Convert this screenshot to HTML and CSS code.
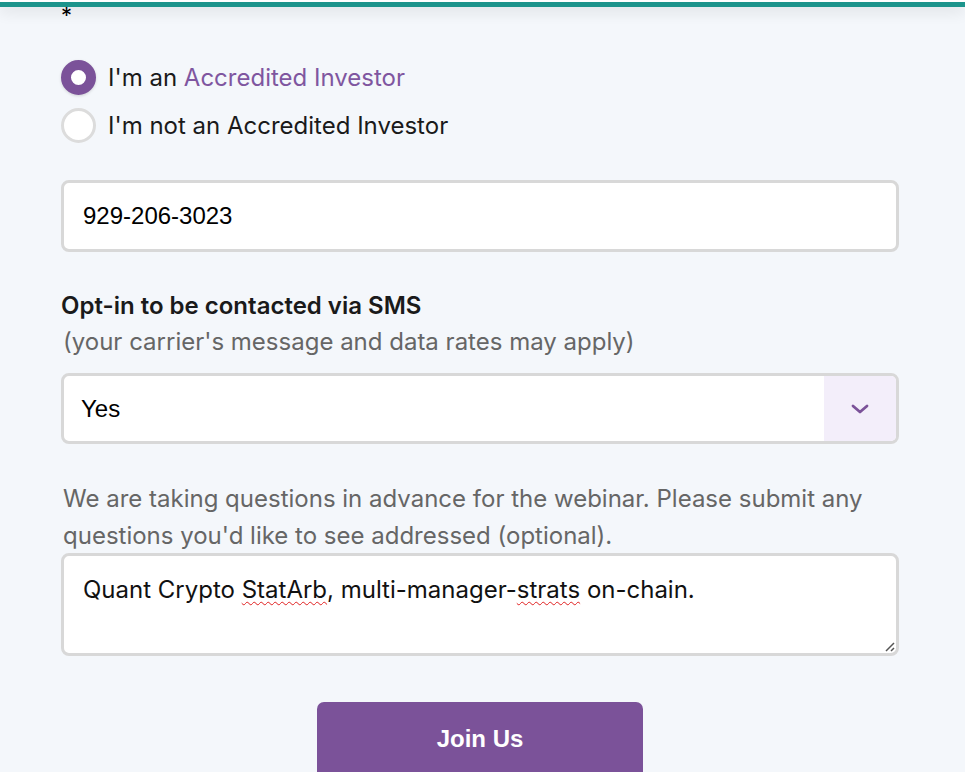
FILE: index.html
```html
<!DOCTYPE html>
<html>
<head>
<meta charset="utf-8">
<link rel="stylesheet" href="styles.css">
</head>
<body>
<div class="topbar"></div>
<form class="form">
  <div class="req">*</div>
  <div class="radios">
    <label class="radio-row">
      <span class="radio checked"></span>
      <span>I'm an <span class="accent">Accredited Investor</span></span>
    </label>
    <label class="radio-row">
      <span class="radio"></span>
      <span>I'm not an Accredited Investor</span>
    </label>
  </div>
  <div class="field phone">929-206-3023</div>
  <div class="label-bold">Opt-in to be contacted via SMS</div>
  <div class="hint">(your carrier's message and data rates may apply)</div>
  <div class="select">
    <div class="select-value">Yes</div>
    <div class="select-arrow">
      <svg width="18" height="10" viewBox="0 0 18 10"><path d="M2 2 L9 8 L16 2" fill="none" stroke="#7b5299" stroke-width="2.8" stroke-linecap="round" stroke-linejoin="round"/></svg>
    </div>
  </div>
  <div class="para">We are taking questions in advance for the webinar. Please submit any questions you'd like to see addressed (optional).</div>
  <div class="textarea">
    <span>Quant Crypto <span class="spell">StatArb</span>, multi-manager-<span class="spell">strats</span> on-chain.</span>
    <svg class="grip" width="12" height="12" viewBox="0 0 12 12"><path d="M11 3 L3 11 M11 8 L8 11" stroke="#555" stroke-width="1.5"/></svg>
  </div>
  <div class="btn-wrap"><button type="button" class="btn">Join Us</button></div>
</form>
</body>
</html>
```

FILE: styles.css
```css
html, body {
  margin: 0;
  padding: 0;
}
body {
  background: #f4f7fb;
  font-family: Inter, "Noto Sans", sans-serif;
  color: #1a1a1a;
  height: 772px;
  overflow: hidden;
}
.topbar {
  position: fixed;
  top: 0;
  left: 0;
  right: 0;
  height: 7px;
  background: #1c948c;
  border-top: 2px solid #fff;
  box-sizing: border-box;
  box-shadow: 0 3px 16px rgba(0, 0, 0, 0.14);
  z-index: 5;
}
.form {
  width: 838px;
  margin-left: 61px;
  display: flex;
  flex-direction: column;
}
.req {
  font-size: 22px;
  line-height: 22px;
  height: 22px;
  margin-top: 4px;
  color: #000;
}
.radios {
  margin-top: 34px;
  display: flex;
  flex-direction: column;
  gap: 13px;
}
.radio-row {
  display: flex;
  align-items: center;
  gap: 12px;
  font-size: 24px;
  color: #1a1a1a;
}
.radio {
  width: 35px;
  height: 35px;
  box-sizing: border-box;
  border-radius: 50%;
  border: 3px solid #dcdcdc;
  background: #fff;
  flex: none;
}
.radio.checked {
  border: 10px solid #7b5299;
  box-shadow: 0 1px 3px rgba(0,0,0,0.15);
}
.accent {
  color: #7f56a0;
}
.field {
  background: #fff;
  border: 3px solid #d8d8d8;
  border-radius: 8px;
  box-sizing: border-box;
}
.phone {
  margin-top: 37px;
  height: 72px;
  padding-left: 19px;
  display: flex;
  align-items: center;
  font-family: "Liberation Sans", Arial, sans-serif;
  font-size: 24px;
  color: #000;
}
.label-bold {
  margin-top: 40px;
  font-size: 24px;
  font-weight: 600;
  line-height: 28px;
  color: #1a1a1a;
}
.hint {
  margin-top: 8px;
  padding-left: 2px;
  font-size: 24px;
  line-height: 28px;
  color: #666;
}
.select {
  margin-top: 17px;
  height: 71px;
  background: #fff;
  border: 3px solid #d8d8d8;
  border-radius: 8px;
  box-sizing: border-box;
  display: flex;
  overflow: hidden;
}
.select-value {
  flex: 1;
  display: flex;
  align-items: center;
  padding-left: 17px;
  font-family: "Liberation Sans", Arial, sans-serif;
  font-size: 24px;
  color: #000;
}
.select-arrow {
  width: 72px;
  background: #f3eefa;
  display: flex;
  align-items: center;
  justify-content: center;
}
.para {
  margin-top: 36px;
  padding-left: 2px;
  font-size: 24px;
  line-height: 37px;
  color: #666;
}
.textarea {
  margin-top: -1px;
  height: 103px;
  background: #fff;
  border: 3px solid #d8d8d8;
  border-radius: 8px;
  box-sizing: border-box;
  padding: 20px 19px;
  font-size: 24px;
  line-height: 28px;
  color: #111;
  position: relative;
}
.spell {
  text-decoration: underline wavy #e02020;
  text-decoration-thickness: 1px;
  text-underline-offset: 3px;
}
.grip {
  position: absolute;
  right: 1px;
  bottom: 1px;
}
.btn-wrap {
  margin-top: 46px;
  display: flex;
  justify-content: center;
}
.btn {
  width: 326px;
  height: 76px;
  background: #7b5299;
  border: none;
  border-radius: 7px;
  color: #fff;
  font-family: "Liberation Sans", Arial, sans-serif;
  font-weight: 700;
  font-size: 24px;
  padding: 0 0 2px;
  margin-left: 0;
}
```
